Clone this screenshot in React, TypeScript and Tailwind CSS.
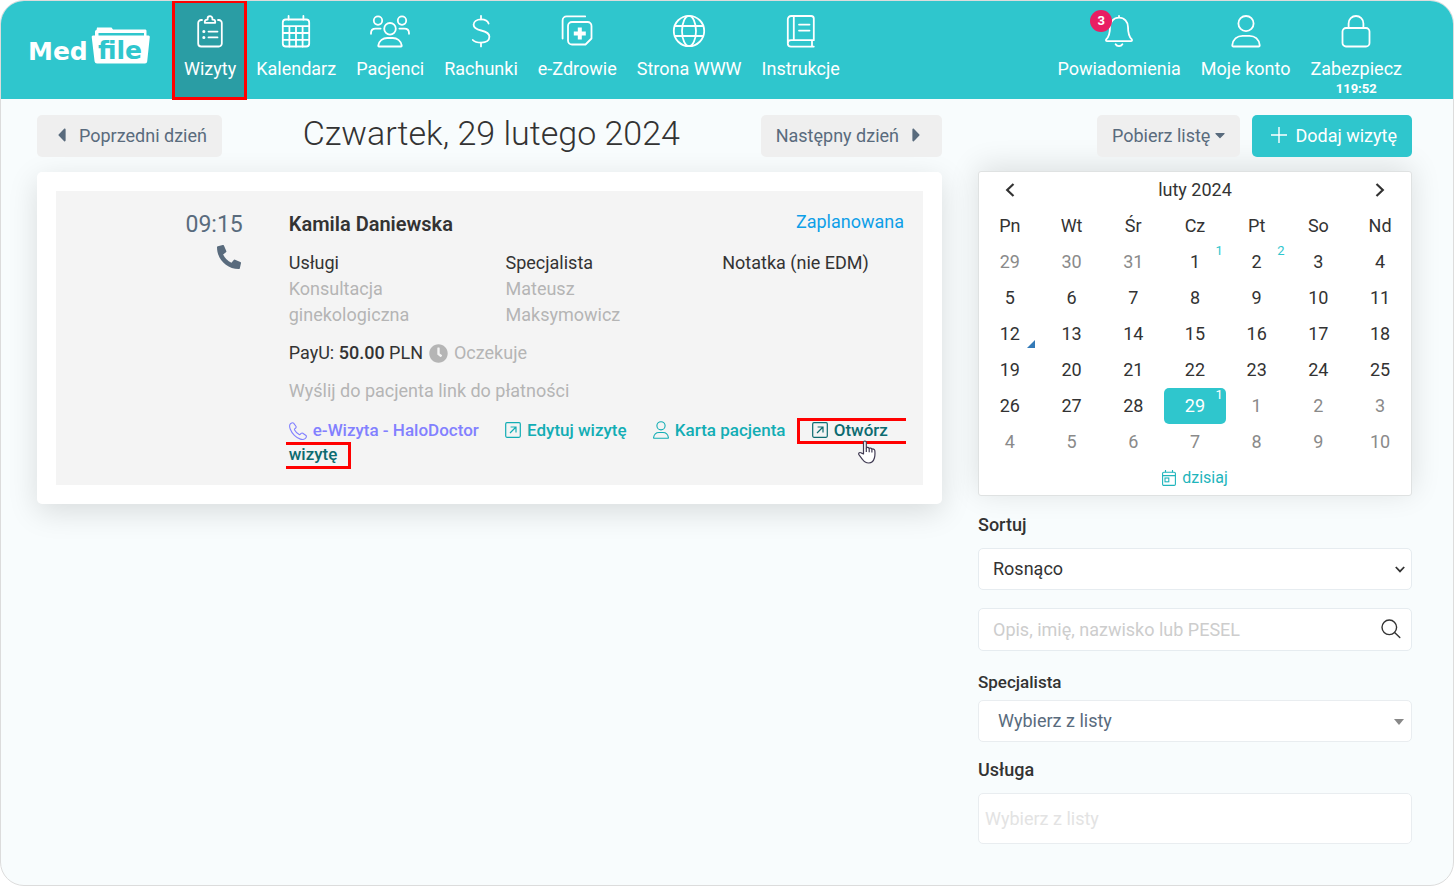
import React, { useState } from 'react';
import { FaCaretLeft, FaCaretRight, FaCaretDown, FaClock, FaPhoneAlt } from 'react-icons/fa';
import { clsx } from 'clsx';

interface IconProps {
  className?: string;
}

/* ---------- Navigation icons, all drawn in a 40x34 box ---------- */

const NavSvg: React.FC<{ children: React.ReactNode }> = ({ children }) => (
  <svg
    viewBox="0 0 40 34"
    className="h-[34px] w-10"
    fill="none"
    stroke="currentColor"
    strokeWidth="1.8"
    strokeLinecap="round"
    strokeLinejoin="round"
    aria-hidden="true"
  >
    {children}
  </svg>
);

const ClipboardIcon = () => (
  <NavSvg>
    <path d="M12 6h-.8a3 3 0 0 0-3 3v20.500a3 3 0 0 0 3 3h17.600a3 3 0 0 0 3-3V9a3 3 0 0 0-3-3H28" />
    <path d="M14.800 8.800h10.400v-1a2.200 2.200 0 0 0-2.200-2.200h-.6v-1a2.400 2.400 0 0 0-4.800 0v1H17a2.200 2.200 0 0 0-2.200 2.200z" />
    <path d="M18.500 17.600h9M18.500 23.400h9" />
    <path d="M13.800 17.600h.1M13.800 23.400h.1" strokeWidth="3" />
  </NavSvg>
);

const CalendarIcon = () => (
  <NavSvg>
    <rect x="6.800" y="5.500" width="26.400" height="27" rx="3" />
    <path d="M12.600 2v3.500M27.400 2v3.500M6.800 12.200h26.400M6.800 19h26.400M6.800 25.800h26.400M13.400 12.200v20.300M20 12.200v20.300M26.600 12.200v20.300" />
  </NavSvg>
);

const PatientsIcon = () => (
  <NavSvg>
    <circle cx="8" cy="6.600" r="4.200" />
    <circle cx="32" cy="6.600" r="4.200" />
    <circle cx="20" cy="14.800" r="5.800" />
    <path d="M1 19.800v-.8c0-2.800 2-4.400 4.600-4.400h5M39 19.800v-.8c0-2.800-2-4.400-4.600-4.400h-5" />
    <path d="M9 32.500c-.6 0-.8-.4-.7-1 .8-4.900 4.700-7.500 9-7.500h5.400c4.300 0 8.200 2.600 9 7.500.1.600-.1 1-.7 1z" />
  </NavSvg>
);

const DollarIcon = () => (
  <NavSvg>
    <path d="M20 1.800v3.600M20 28.600v3.800" />
    <path d="M27.600 9.600c-.8-2.700-3.500-4.200-7.400-4.200-4.600 0-7.600 2.200-7.600 5.400 0 3.300 2.600 4.600 7.600 5.700 5.300 1.200 8.200 2.700 8.200 6.300 0 3.500-3.200 5.800-8 5.800-4 0-7.200-1-8.600-2.600" />
  </NavSvg>
);

const EHealthIcon = () => (
  <NavSvg>
    <path d="M5.600 24.500V6.400a4 4 0 0 1 4-4h18.600" />
    <path d="M15 8h15.500a4 4 0 0 1 4 4v12.500l-6 6H15a4 4 0 0 1-4-4V12a4 4 0 0 1 4-4z" />
    <path d="M22.800 13.400v12M16.800 19.400h12" strokeWidth="4" strokeLinecap="butt" />
  </NavSvg>
);

const GlobeIcon = () => (
  <NavSvg>
    <circle cx="20" cy="17" r="15.200" />
    <ellipse cx="20" cy="17" rx="7" ry="15.200" />
    <path d="M5.700 12h28.600M5.700 22h28.600" />
  </NavSvg>
);

const BookIcon = () => (
  <NavSvg>
    <path d="M6.800 29.200V5.400a3.400 3.400 0 0 1 3.400-3.400h20a2.600 2.600 0 0 1 2.600 2.600v21.600H10a3.200 3.200 0 0 0 0 6.400h22.800M12.800 2v24.200M31 26.400v6" />
    <path d="M18 10.600h10.500M18 16.600h10.500" />
  </NavSvg>
);

const BellIcon = () => (
  <NavSvg>
    <path d="M20 2v1.600M20 3.600c-5.400 0-9 4-9 9.400 0 7-1 9.500-3.600 12.200-.9 1-.4 1.900.8 1.900h23.600c1.200 0 1.700-.9.8-1.900C30 22.500 29 20 29 13c0-5.400-3.600-9.400-9-9.400z" />
    <path d="M16.600 30.200c1.400 2.600 5.400 2.600 6.800 0" />
  </NavSvg>
);

const UserIcon = () => (
  <NavSvg>
    <circle cx="20" cy="9.600" r="7.600" />
    <path d="M7.400 32.500c-.8 0-1.200-.5-1.100-1.300.7-6 5-9.400 10.300-9.400h6.800c5.300 0 9.600 3.400 10.300 9.400.1.800-.3 1.300-1.100 1.300z" />
  </NavSvg>
);

const LockIcon = () => (
  <NavSvg>
    <rect x="6.500" y="14" width="27" height="18.500" rx="3.500" />
    <path d="M12.600 14V9.400a7.400 7.400 0 0 1 14.800 0V14" />
  </NavSvg>
);

/* ---------- Small icons ---------- */

const OpenIcon: React.FC<IconProps> = ({ className }) => (
  <svg viewBox="0 0 16 16" className={className} fill="none" stroke="currentColor" strokeWidth="1.200" aria-hidden="true">
    <rect x=".7" y=".7" width="14.600" height="14.600" rx="1.200" />
    <path d="M5 11l6-6M5.600 5H11v5.400" />
  </svg>
);

const PatientIcon: React.FC<IconProps> = ({ className }) => (
  <svg viewBox="0 0 16 18" className={className} fill="none" stroke="currentColor" strokeWidth="1.100" aria-hidden="true">
    <circle cx="8" cy="4.800" r="4.100" />
    <path d="M1.200 17.300c-.5 0-.7-.3-.6-.7.500-3.500 2.900-5.100 5.400-5.100h4c2.500 0 4.900 1.600 5.400 5.100.1.400-.1.700-.6.700z" strokeLinejoin="round" />
  </svg>
);

const HandsetIcon: React.FC<IconProps> = ({ className }) => (
  <svg viewBox="0 0 18 18" className={className} fill="none" stroke="currentColor" strokeWidth="1.100" strokeLinejoin="round" aria-hidden="true">
    <path d="M1.500 1.700C2.900.6 4 .5 4.600 1.100l2.300 3.200c.4.600.3 1.200-.2 1.700l-1 .9c-.3.300-.3.600-.1 1 1.100 2 2.600 3.500 4.600 4.600.4.200.7.200 1-.1l.9-1c.5-.5 1.100-.6 1.700-.2l3.200 2.300c.6.600.5 1.700-.6 2.900-2.300 2.300-7.300.6-11-3.100S-.8 4 1.500 1.700z" />
  </svg>
);

const TodayIcon: React.FC<IconProps> = ({ className }) => (
  <svg viewBox="0 0 14 16" className={className} fill="none" stroke="currentColor" strokeWidth="1.100" aria-hidden="true">
    <rect x=".6" y="2.200" width="12.800" height="13.200" rx="1.200" />
    <path d="M.6 5.600h12.800M3.500 0v2.200M10.500 0v2.200" />
    <rect x="3" y="8" width="3.800" height="3.800" />
  </svg>
);

const HandCursor: React.FC<IconProps> = ({ className }) => (
  <svg viewBox="0 0 18 24" className={className} fill="#fff" stroke="#3f3a52" strokeWidth="1.200" strokeLinejoin="round" aria-hidden="true">
    <path d="M5.500 14V2.400a1.400 1.400 0 0 1 2.800 0V8c.4-.9 2.500-.9 2.900.5.5-.8 2.300-.6 2.700.7.6-.5 2.600-.2 2.900 1.300.3 2.500.2 5.300-.4 7.500-.8 2.800-2.300 5-5.600 5-3.200 0-4.700-1-6.400-3.700L.9 14.600c-.8-1.500 1-2.700 2.200-1.700z" />
    <path d="M8.300 8v4M11.200 8.500v3.700M13.900 9.200v3.200" />
  </svg>
);

const Logo = () => (
  <svg viewBox="0 0 122 40" className="h-10 w-[122px]" role="img" aria-label="MedFile">
    <text x="-1" y="33" fill="#fff" fontSize="25" fontWeight="700" fontFamily="'DejaVu Sans', sans-serif">
      Med
    </text>
    <path d="M66 9V4.500Q66 3 67.500 3L68 .5h14.500L84 2.500h32.500Q117.500 2.500 117.500 4V9h-2.500V6H69.500v3z" fill="#fff" />
    <path d="M64 8.500h55.500Q121 8.500 120.800 10l-2.600 24.500Q118 36.500 116 36.500H68Q66 36.500 65.600 34.500L62.700 10Q62.500 8.500 64 8.500z" fill="#fff" />
    <text x="69" y="32" fill="#2fc6cd" fontSize="25" fontWeight="700" fontFamily="'DejaVu Sans', sans-serif">
      file
    </text>
  </svg>
);

/* ---------- Data ---------- */

const NAV_ITEMS = [
  { label: 'Kalendarz', Icon: CalendarIcon },
  { label: 'Pacjenci', Icon: PatientsIcon },
  { label: 'Rachunki', Icon: DollarIcon },
  { label: 'e-Zdrowie', Icon: EHealthIcon },
  { label: 'Strona WWW', Icon: GlobeIcon },
  { label: 'Instrukcje', Icon: BookIcon },
];

const WEEKDAYS = ['Pn', 'Wt', 'Śr', 'Cz', 'Pt', 'So', 'Nd'];

interface Day {
  day: number;
  other?: boolean;
  visits?: number;
  marked?: boolean;
}

// 2024-02, padded with the end of January and the start of March
const DAYS: Day[] = [
  ...[29, 30, 31].map((day) => ({ day, other: true })),
  ...Array.from({ length: 29 }, (_, i) => ({
    day: i + 1,
    visits: ({ 1: 1, 2: 2, 29: 1 } as Record<number, number>)[i + 1],
    marked: i + 1 === 12,
  })),
  ...Array.from({ length: 10 }, (_, i) => ({ day: i + 1, other: true })),
];

const WEEKS = Array.from({ length: 6 }, (_, i) => DAYS.slice(i * 7, i * 7 + 7));

/* ---------- Sections ---------- */

const Header = () => (
  <header className="flex h-[98px] items-stretch bg-[#2fc6cd] pr-[41px] leading-6 text-white">
    <a href="#" className="mr-[21px] pt-[26px] pl-7">
      <Logo />
    </a>
    <nav className="flex">
      <a href="#" className="-mt-px -mb-px flex flex-col items-center border-[3px] border-[#ff0000] bg-[#2a9da4] pt-[11px] pr-2 pl-[9px]">
        <ClipboardIcon />
        <span className="mt-[9px]">Wizyty</span>
      </a>
      <div className="-ml-px flex">
        {NAV_ITEMS.map(({ label, Icon }) => (
          <a key={label} href="#" className="flex flex-col items-center px-[10px] pt-[13px]">
            <Icon />
            <span className="mt-[9px]">{label}</span>
          </a>
        ))}
      </div>
    </nav>
    <div className="ml-auto flex gap-5">
      <a href="#" className="flex flex-col items-center pt-[13px]">
        <span className="relative">
          <BellIcon />
          <span className="absolute -top-1 -left-[9px] flex h-[22px] w-[22px] items-center justify-center rounded-full bg-[#e91e63] text-[13px] font-bold">
            3
          </span>
        </span>
        <span className="mt-[9px]">Powiadomienia</span>
      </a>
      <a href="#" className="flex flex-col items-center pt-[13px]">
        <UserIcon />
        <span className="mt-[9px]">Moje konto</span>
      </a>
      <a href="#" className="mr-[10px] flex flex-col items-center pt-[13px]">
        <LockIcon />
        <span className="mt-[9px]">Zabezpiecz</span>
        <span className="text-[13px] leading-4 font-bold">119:52</span>
      </a>
    </div>
  </header>
);

const VisitCard = () => (
  <section className="mt-[15px] rounded-[5px] bg-white p-[19px] shadow-[0_8px_30px_rgba(0,0,0,0.13)]">
    <div className="grid grid-cols-12 bg-[#f4f4f4] pt-5 pb-[19px] leading-[26px]">
      <div className="col-span-3 flex flex-col items-end pr-[30px] text-[#596b7d]">
        <time className="text-[23px] leading-7">09:15</time>
        <FaPhoneAlt className="mt-[6px] mr-[2px] h-6 w-6" />
      </div>
      <div className="col-span-9 pl-4">
        <div className="flex justify-between pr-[19px]">
          <h2 className="text-[20px] font-semibold">Kamila Daniewska</h2>
          <span className="leading-[22px] text-[#0e9fe8]">Zaplanowana</span>
        </div>
        <dl className="mt-[13px] -ml-4 grid grid-cols-3">
          <div className="px-4">
            <dt>Usługi</dt>
            <dd className="text-[#b5b5b5]">Konsultacja ginekologiczna</dd>
          </div>
          <div className="px-4">
            <dt>Specjalista</dt>
            <dd className="text-[#b5b5b5]">Mateusz Maksymowicz</dd>
          </div>
          <div className="px-4">
            <dt>Notatka (nie EDM)</dt>
          </div>
        </dl>
        <p className="mt-3 flex items-center">
          <span>
            PayU: <b className="font-medium">50.00</b> PLN
          </span>
          <FaClock className="mr-[6px] ml-[6px] h-[19px] w-[19px] text-[#b5b5b5]" />
          <span className="text-[#b5b5b5]">Oczekuje</span>
        </p>
        <p className="mt-3">
          <a href="#" className="text-[#b5b5b5]">
            Wyślij do pacjenta link do płatności
          </a>
        </p>
        <div className="mt-[14px] pr-[17px] text-[17px] leading-6 font-medium text-[#12adb4]">
          <a href="#" className="mr-[22px] text-[#8280ff]">
            <HandsetIcon className="mr-[6px] inline h-[18px] w-[18px] align-[-4px]" />
            e-Wizyta - HaloDoctor
          </a>{' '}
          <a href="#" className="mr-[22px]">
            <OpenIcon className="mr-[6px] inline h-4 w-4 align-[-2px]" />
            Edytuj wizytę
          </a>{' '}
          <a href="#" className="mr-[22px]">
            <PatientIcon className="mr-[6px] inline h-[18px] w-4 align-[-3px]" />
            Karta pacjenta
          </a>{' '}
          <a href="#" className="text-[#0c6b70]">
            <span className="relative whitespace-nowrap">
              <OpenIcon className="mr-[6px] inline h-4 w-4 align-[-2px]" />
              Otwórz
              <span className="absolute -top-[2px] -right-[18px] -left-[15px] h-[26px] border-[3px] border-r-0 border-[#ff0000]" />
              <HandCursor className="absolute top-5 right-3 h-6 w-[18px]" />
            </span>{' '}
            <span className="relative">
              wizytę
              <span className="absolute -top-[2px] -right-[14px] -left-[3px] h-[27px] border-[3px] border-l-0 border-[#ff0000]" />
            </span>
          </a>
        </div>
      </div>
    </div>
  </section>
);

const MonthCalendar = () => {
  const [selected, setSelected] = useState(29);

  return (
    <section className="mt-[14px] rounded-[3px] border border-[#dfe2e2] bg-white shadow-[0_-4px_30px_rgba(0,0,0,0.12)]">
      <div className="grid h-[35px] grid-cols-7 items-center text-center">
        <button type="button" aria-label="Poprzedni miesiąc" className="flex justify-center">
          <svg viewBox="0 0 10 14" className="h-[14px] w-[10px]" fill="none" stroke="currentColor" strokeWidth="2.200">
            <path d="M8.500 1L2.200 7l6.300 6" />
          </svg>
        </button>
        <span className="col-span-5">luty 2024</span>
        <button type="button" aria-label="Następny miesiąc" className="flex justify-center">
          <svg viewBox="0 0 10 14" className="h-[14px] w-[10px]" fill="none" stroke="currentColor" strokeWidth="2.200">
            <path d="M1.500 1l6.300 6-6.300 6" />
          </svg>
        </button>
      </div>
      <table className="w-full table-fixed border-collapse text-center">
        <thead>
          <tr>
            {WEEKDAYS.map((name) => (
              <th key={name} className="h-[37px] p-0 font-normal">
                {name}
              </th>
            ))}
          </tr>
        </thead>
        <tbody>
          {WEEKS.map((week, i) => (
            <tr key={i}>
              {week.map(({ day, other, visits, marked }) => {
                const active = !other && day === selected;
                return (
                  <td key={day} className="p-0">
                    <button
                      type="button"
                      onClick={() => !other && setSelected(day)}
                      className={clsx(
                        'relative block h-9 w-full rounded-[5px] pb-px',
                        other && 'text-[#8a8a8a]',
                        active && 'bg-[#2fc6cd] text-white'
                      )}
                    >
                      {day}
                      {visits && (
                        <span className={clsx('absolute top-0 right-[3px] text-[13px] leading-[14px]', !active && 'text-[#2fc6cd]')}>
                          {visits}
                        </span>
                      )}
                      {marked && (
                        <svg viewBox="0 0 8 8" className="absolute right-[6px] bottom-1 h-2 w-2" aria-hidden="true">
                          <path d="M8 0v8H0z" fill="#337ab7" />
                        </svg>
                      )}
                    </button>
                  </td>
                );
              })}
            </tr>
          ))}
        </tbody>
      </table>
      <button type="button" className="mx-auto flex h-[35px] items-center gap-[6px] text-[16px] text-[#1fb5bc]">
        <TodayIcon className="h-4 w-[14px]" />
        dzisiaj
      </button>
    </section>
  );
};

const Filters = () => (
  <form className="mt-[17px] leading-6" onSubmit={(e) => e.preventDefault()}>
    <label htmlFor="sort" className="block font-medium">
      Sortuj
    </label>
    <div className="relative mt-[11px]">
      <select id="sort" className="h-[42px] w-full appearance-none rounded-[5px] border border-[#e6ecf0] bg-white px-[14px]">
        <option>Rosnąco</option>
        <option>Malejąco</option>
      </select>
      <svg viewBox="0 0 10 7" className="pointer-events-none absolute top-[18px] right-[7px] h-[7px] w-[10px]" fill="none" stroke="currentColor" strokeWidth="1.800">
        <path d="M.8 1L5 5.400 9.200 1" />
      </svg>
    </div>
    <div className="relative mt-[18px]">
      <input
        type="text"
        aria-label="Szukaj"
        placeholder="Opis, imię, nazwisko lub PESEL"
        className="h-[43px] w-full rounded-[5px] border border-[#e6ecf0] bg-white px-[14px] placeholder:text-[#cdcdcd]"
      />
      <button type="submit" aria-label="Szukaj" className="absolute top-[11px] right-[11px]">
        <svg viewBox="0 0 20 20" className="h-5 w-5" fill="none" stroke="currentColor" strokeWidth="1.400" strokeLinecap="round">
          <circle cx="8.300" cy="8.300" r="7.300" />
          <path d="M13.600 13.600l5.200 5" />
        </svg>
      </button>
    </div>
    <label htmlFor="specialist" className="mt-[19px] block text-[17px] font-medium">
      Specjalista
    </label>
    <div className="relative mt-[6px]">
      <select id="specialist" className="h-[42px] w-full appearance-none rounded-[5px] border border-[#e9edf0] bg-white px-[19px] text-[#596b7d]">
        <option>Wybierz z listy</option>
      </select>
      <svg viewBox="0 0 10 6" className="pointer-events-none absolute top-[19px] right-2 h-[6px] w-[10px]">
        <path d="M0 0h10L5 6z" fill="#888" />
      </svg>
    </div>
    <label htmlFor="service" className="mt-4 block font-medium">
      Usługa
    </label>
    <input
      id="service"
      type="text"
      placeholder="Wybierz z listy"
      className="mt-[11px] h-[51px] w-full rounded-[5px] border border-[#e9edf0] bg-white px-[6px] pb-px placeholder:text-[#e3e3e3]"
    />
  </form>
);

const App: React.FC = () => (
  <div className="min-h-screen overflow-hidden rounded-[24px] border border-[#dcdcdc] bg-[#f8fcfd] pb-[41px] font-['Roboto',sans-serif] text-[18px] text-[#333]">
    <Header />
    <main className="grid grid-cols-[minmax(0,905fr)_minmax(0,434fr)] gap-x-9 pt-4 pr-[41px] pl-9">
      <div>
        <div className="flex items-start justify-between">
          <button type="button" className="flex h-[42px] items-center rounded-[5px] bg-[#efefef] pr-[15px] pb-[2px] pl-[14px] text-[#596b7d]">
            <FaCaretLeft className="mr-[7px] h-[22px] w-[21px]" />
            Poprzedni dzień
          </button>
          <h1 className="text-[34px] leading-9 font-light">Czwartek, 29 lutego 2024</h1>
          <button type="button" className="flex h-[42px] items-center rounded-[5px] bg-[#efefef] px-[15px] pb-[2px] text-[#596b7d]">
            Następny dzień
            <FaCaretRight className="ml-[7px] h-[22px] w-[21px]" />
          </button>
        </div>
        <VisitCard />
      </div>
      <aside>
        <div className="flex justify-end gap-3">
          <button type="button" className="flex h-[42px] items-center gap-[5px] rounded-[5px] bg-[#efefef] px-[15px] pb-[2px] text-[#596b7d]">
            Pobierz listę
            <FaCaretDown className="h-4 w-[10px]" />
          </button>
          <button type="button" className="flex h-[42px] items-center gap-2 rounded-[5px] bg-[#2fc6cd] pr-[15px] pb-[2px] pl-[19px] text-white">
            <svg viewBox="0 0 16 16" className="h-4 w-4" stroke="currentColor" strokeWidth="1.400" aria-hidden="true">
              <path d="M8 0v16M0 8h16" />
            </svg>
            Dodaj wizytę
          </button>
        </div>
        <MonthCalendar />
        <Filters />
      </aside>
    </main>
  </div>
);

export default App;
